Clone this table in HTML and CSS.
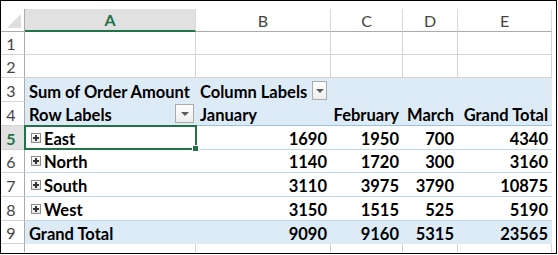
FILE: index.html
```html
<!DOCTYPE html>
<html lang="en">
<head>
<meta charset="utf-8"/>
<title>Pivot Table</title>
<link rel="stylesheet" href="styles.css">
</head>
<body>
<div class="frame">
  <div class="sheet">
    <!-- column headers -->
    <div class="corner"><span class="tri"></span></div>
    <div class="colhead active">A</div>
    <div class="colhead">B</div>
    <div class="colhead">C</div>
    <div class="colhead">D</div>
    <div class="colhead">E</div>
    <div class="pad"></div>

    <!-- row 1 -->
    <div class="rowhead">1</div>
    <div class="cell"></div><div class="cell"></div><div class="cell"></div><div class="cell"></div><div class="cell"></div>
    <div class="pad"></div>

    <!-- row 2 -->
    <div class="rowhead">2</div>
    <div class="cell"></div><div class="cell"></div><div class="cell"></div><div class="cell"></div><div class="cell"></div>
    <div class="pad"></div>

    <!-- row 3 -->
    <div class="rowhead">3</div>
    <div class="pv head">Sum of Order Amount</div>
    <div class="pv head">Column Labels <span class="drop"></span></div>
    <div class="pv head"></div><div class="pv head"></div><div class="pv head"></div>
    <div class="pad"></div>

    <!-- row 4 -->
    <div class="rowhead">4</div>
    <div class="pv head split">Row Labels <span class="drop"></span></div>
    <div class="pv head split">January</div>
    <div class="pv head split num">February</div>
    <div class="pv head split num">March</div>
    <div class="pv head split num">Grand Total</div>
    <div class="pad"></div>

    <!-- rows 5-8 -->
    <div class="rowhead active">5</div>
    <div class="pv item sel"><span class="expand"></span>East</div>
    <div class="pv item num">1690</div><div class="pv item num">1950</div><div class="pv item num">700</div><div class="pv item num">4340</div>
    <div class="pad"></div>

    <div class="rowhead">6</div>
    <div class="pv item"><span class="expand"></span>North</div>
    <div class="pv item num">1140</div><div class="pv item num">1720</div><div class="pv item num">300</div><div class="pv item num">3160</div>
    <div class="pad"></div>

    <div class="rowhead">7</div>
    <div class="pv item"><span class="expand"></span>South</div>
    <div class="pv item num">3110</div><div class="pv item num">3975</div><div class="pv item num">3790</div><div class="pv item num">10875</div>
    <div class="pad"></div>

    <div class="rowhead">8</div>
    <div class="pv item"><span class="expand"></span>West</div>
    <div class="pv item num">3150</div><div class="pv item num">1515</div><div class="pv item num">525</div><div class="pv item num">5190</div>
    <div class="pad"></div>

    <!-- row 9 -->
    <div class="rowhead">9</div>
    <div class="pv total">Grand Total</div>
    <div class="pv total num">9090</div><div class="pv total num">9160</div><div class="pv total num">5315</div><div class="pv total num">23565</div>
    <div class="pad"></div>

    <!-- partial row 10 -->
    <div class="rowhead last"></div>
    <div class="cell last"></div><div class="cell last"></div><div class="cell last"></div><div class="cell last"></div><div class="cell last"></div>
    <div class="pad"></div>
  </div>
</div>
</body>
</html>
```

FILE: styles.css
```css
body {
  margin: 0;
  background: #fff;
  font-family: Lato, "Open Sans", sans-serif;
}

.frame {
  width: 555px;
  height: 244px;
  padding-top: 8px;
  border: 1px solid #000;
  overflow: hidden;
}

.sheet {
  display: grid;
  grid-template-columns: 24px 171px 135px 72px 55px 94px 4px;
  grid-template-rows: 23px 23px 23px 24px 24px 24px 23px 24px 24px 23px 8px;
}

.pad {
  background: #fff;
}

/* headers */
.corner {
  position: relative;
  background: #fff;
  border-right: 1px solid #ababab;
  border-bottom: 1px solid #ababab;
}
.tri {
  position: absolute;
  right: 3px;
  bottom: 3px;
  width: 0;
  height: 0;
  border-left: 14px solid transparent;
  border-bottom: 14px solid #dfdfdf;
}

.colhead {
  display: flex;
  align-items: center;
  justify-content: center;
  color: #444;
  font-size: 16px;
  background: #fff;
  border-right: 1px solid #dadada;
  border-bottom: 1px solid #ababab;
}
.colhead.active {
  background: #e1e1e1;
  color: #217346;
  font-weight: bold;
  border-bottom: 2px solid #217346;
}

.rowhead {
  display: flex;
  align-items: flex-end;
  justify-content: center;
  padding: 0 3px 1px 0;
  color: #444;
  font-size: 16px;
  background: #fff;
  border-right: 1px solid #ababab;
  border-bottom: 1px solid #d4d4d4;
}
.rowhead.active {
  background: #e1e1e1;
  color: #217346;
  font-weight: bold;
}
.rowhead.last {
  border-bottom: none;
}

.cell {
  border-right: 1px solid #d4d4d4;
  border-bottom: 1px solid #d4d4d4;
}
.cell.last {
  border-bottom: none;
}

/* pivot table */
.pv {
  display: flex;
  align-items: flex-end;
  gap: 5px;
  padding: 0 4px 0 4px;
  font-size: 16.5px;
  font-weight: bold;
  color: #000;
  white-space: nowrap;
}
.pv.num {
  justify-content: flex-end;
}
.pv.head {
  background: #ddebf7;
}
.pv.head.split {
  border-bottom: 1px solid #9bc2e6;
}
.pv.item {
  background: #fff;
  border-bottom: 1px solid #bdd7ee;
}
.pv.total {
  background: #ddebf7;
}

.drop {
  box-sizing: border-box;
  width: 19px;
  height: 19px;
  margin-bottom: 2px;
  border: 1px solid #ababab;
  background: linear-gradient(#fdfdfd, #eeeeee);
  display: flex;
  align-items: center;
  justify-content: center;
}
.drop::after {
  content: "";
  border-left: 4px solid transparent;
  border-right: 4px solid transparent;
  border-top: 4px solid #5a5a5a;
}
.split .drop {
  margin-left: auto;
  margin-right: -2px;
}

.expand {
  box-sizing: border-box;
  position: relative;
  width: 10px;
  height: 10px;
  margin: 0 -2px 6px 2px;
  border: 1px solid #8c8c8c;
  background: linear-gradient(#ffffff, #e4e4e4);
}
.expand::before,
.expand::after {
  content: "";
  position: absolute;
  background: #333;
}
.expand::before {
  left: 1px;
  top: 3px;
  width: 6px;
  height: 2px;
}
.expand::after {
  left: 3px;
  top: 1px;
  width: 2px;
  height: 6px;
}

/* active cell */
.sel {
  position: relative;
}
.sel::before {
  content: "";
  position: absolute;
  left: -1px;
  top: -1px;
  right: -1px;
  bottom: -1px;
  border: 2px solid #217346;
}
.sel::after {
  content: "";
  position: absolute;
  right: -3px;
  bottom: -3px;
  width: 5px;
  height: 5px;
  background: #217346;
  border: 1px solid #fff;
}
```
